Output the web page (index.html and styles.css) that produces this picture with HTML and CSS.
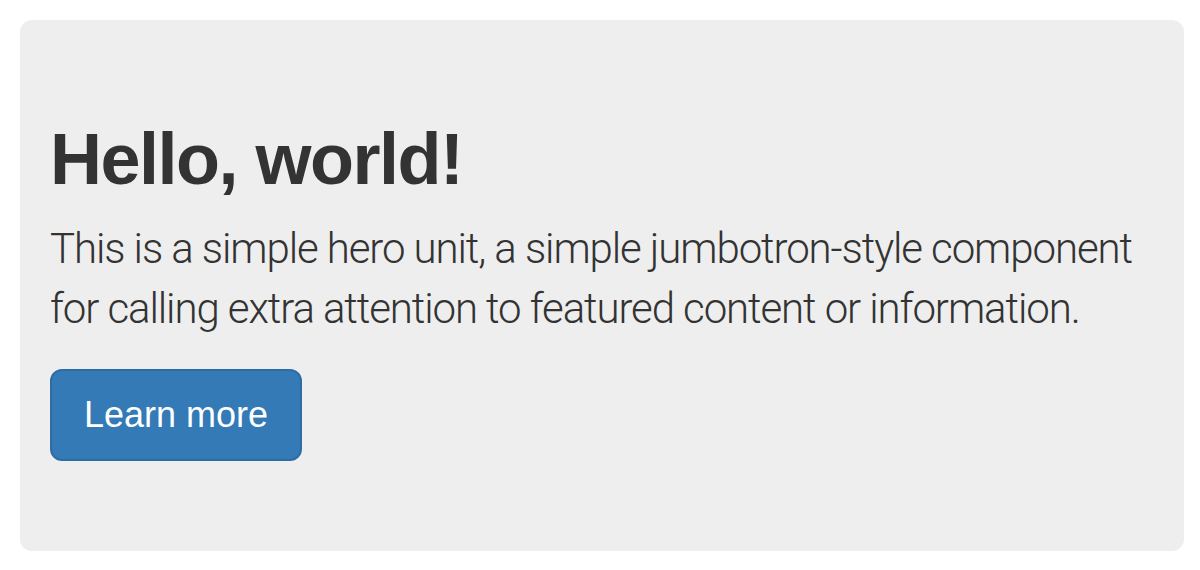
FILE: index.html
```html
<!DOCTYPE html>
<html lang="en">
<head>
<meta charset="utf-8">
<title>Jumbotron</title>
<link rel="stylesheet" href="styles.css">
</head>
<body>
<div class="jumbotron">
  <h1 class="title">Hello, world!</h1>
  <p class="lead">This is a simple hero unit, a simple jumbotron-style component for calling extra attention to featured content or information.</p>
  <p class="actions"><a class="btn" href="#">Learn more</a></p>
</div>
</body>
</html>
```
FILE: styles.css
```css
html, body {
  margin: 0;
  padding: 0;
  background: #fff;
}
body {
  padding: 20px 16px 20px 20px;
  font-family: "Liberation Sans", Arial, sans-serif;
  color: #333;
}
.jumbotron {
  background: #eee;
  border-radius: 12px;
  padding: 60px 30px;
}
.title {
  margin: 40px 0 20px;
  font-size: 72px;
  line-height: 1.1;
  font-weight: 700;
  letter-spacing: -1.5px;
  color: #333;
}
.lead {
  margin: 0 0 30px;
  font-family: "Roboto", "Liberation Sans", sans-serif;
  font-size: 42px;
  font-weight: 300;
  line-height: 60px;
  letter-spacing: -1.1px;
  color: #333;
}
.actions {
  margin: 0 0 30px;
  line-height: 0;
}
.btn {
  display: inline-block;
  box-sizing: border-box;
  padding: 20px 32px;
  font-size: 36px;
  line-height: 48px;
  color: #fff;
  text-decoration: none;
  background: #337ab7;
  border: 2px solid #2e6da4;
  border-radius: 12px;
}
```
